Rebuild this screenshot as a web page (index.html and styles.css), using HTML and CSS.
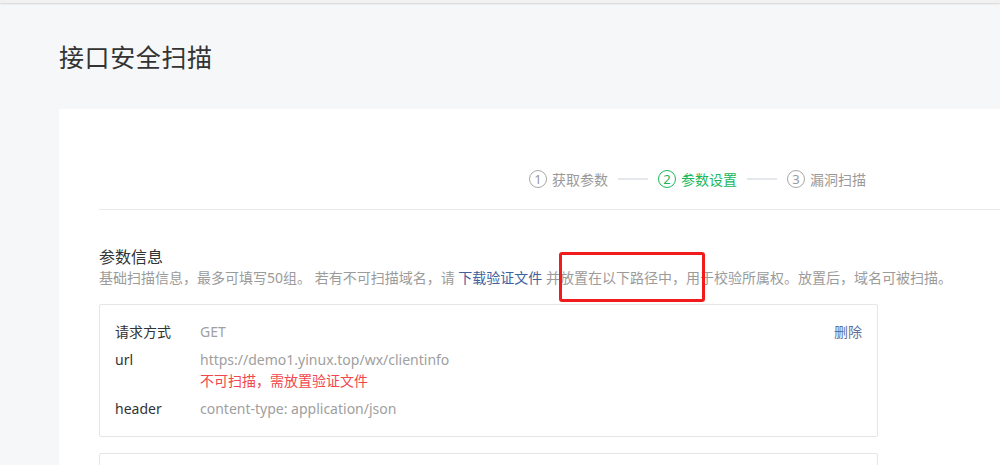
FILE: index.html
```html
<!DOCTYPE html>
<html lang="zh-CN">
<head>
<meta charset="utf-8">
<title>接口安全扫描</title>
<link rel="stylesheet" href="styles.css">
</head>
<body>
<div class="topbar"></div>
<main class="page">
  <h1 class="page-title">接口安全扫描</h1>
  <section class="card">
    <div class="steps">
      <div class="step">
        <span class="step-num">1</span><span class="step-text">获取参数</span>
      </div>
      <span class="step-line"></span>
      <div class="step active">
        <span class="step-num">2</span><span class="step-text">参数设置</span>
      </div>
      <span class="step-line"></span>
      <div class="step">
        <span class="step-num">3</span><span class="step-text">漏洞扫描</span>
      </div>
    </div>

    <div class="section">
      <h2 class="section-title">参数信息</h2>
      <p class="section-desc">基础扫描信息，最多可填写50组。 若有不可扫描域名，请 <a class="link" href="#">下载验证文件</a> 并放置在以下路径中，用于校验所属权。放置后，域名可被扫描。</p>

      <div class="param-box">
        <div class="param-rows">
          <div class="param-row">
            <span class="param-label">请求方式</span>
            <span class="param-value">GET</span>
          </div>
          <div class="param-row">
            <span class="param-label">url</span>
            <div class="param-value">
              <div>https://demo1.yinux.top/wx/clientinfo</div>
              <div class="param-error">不可扫描，需放置验证文件</div>
            </div>
          </div>
          <div class="param-row">
            <span class="param-label">header</span>
            <span class="param-value">content-type: application/json</span>
          </div>
        </div>
        <a class="param-delete" href="#">删除</a>
      </div>
      <div class="param-box next"></div>
    </div>
  </section>
</main>
<div class="annotation"></div>
</body>
</html>
```

FILE: styles.css
```css
* {
  box-sizing: border-box;
}

html, body {
  margin: 0;
  padding: 0;
}

body {
  background: #f6f7f9;
  font-family: "Noto Sans", "Noto Sans CJK SC", sans-serif;
  color: #333;
  width: 1000px;
  height: 465px;
  overflow: hidden;
  position: relative;
}

.topbar {
  height: 3px;
  background: #f1f1f1;
  box-shadow: 0 1px 2px rgba(0, 0, 0, 0.14);
  position: relative;
  z-index: 1;
}

.page {
  padding: 35px 0 0 59px;
  height: 462px;
  display: flex;
  flex-direction: column;
}

.page-title {
  margin: 0;
  font-family: "Noto Sans CJK SC", sans-serif;
  font-size: 25px;
  font-weight: 400;
  line-height: 36px;
  color: #333;
  letter-spacing: 0.6px;
}

.card {
  margin-top: 35px;
  background: #fff;
  flex: 1;
  min-height: 0;
  overflow: hidden;
  padding-left: 40px;
}

.steps {
  display: flex;
  align-items: center;
  height: 101px;
  padding: 58px 0 19px 430px;
  border-bottom: 1px solid #e8e9ec;
  font-family: "Noto Sans CJK SC", sans-serif;
}

.step {
  display: flex;
  align-items: center;
  color: #9a9a9a;
  font-size: 14px;
  line-height: 24px;
}

.step-num {
  width: 18px;
  height: 18px;
  border: 1px solid #a8a8a8;
  border-radius: 50%;
  font-family: "Noto Sans", sans-serif;
  font-size: 13px;
  line-height: 16px;
  text-align: center;
  margin-right: 5px;
}

.step.active {
  color: #18b85c;
}

.step.active .step-num {
  border-color: #18b85c;
}

.step-line {
  width: 30px;
  height: 2px;
  background: #e4e7eb;
  margin: 0 10px;
}

.section {
  padding-top: 35px;
  width: 779px;
}

.section-title {
  margin: 0;
  font-family: "Noto Sans CJK SC", sans-serif;
  font-size: 16px;
  font-weight: 400;
  line-height: 22px;
  color: #333;
}

.section-desc {
  margin: 1px 0 0;
  font-size: 14px;
  line-height: 20px;
  color: #9b9b9b;
  white-space: nowrap;
}

.link {
  color: #42609b;
  text-decoration: none;
}

.param-box {
  margin-top: 16px;
  border: 1px solid #e4e6ea;
  border-radius: 2px;
  display: flex;
  justify-content: space-between;
  align-items: flex-start;
  padding: 17px 15px 17px 15px;
}

.param-box.next {
  height: 40px;
}

.param-rows {
  display: flex;
  flex-direction: column;
  gap: 8px;
}

.param-row {
  display: flex;
  font-size: 14px;
  line-height: 20px;
}

.param-label {
  width: 85px;
  color: #333;
}

.param-value {
  color: #a0a0a0;
}

.param-error {
  color: #f2464d;
  margin-top: 1px;
}

.param-delete {
  font-size: 14px;
  line-height: 20px;
  color: #5c6f9e;
  text-decoration: none;
}

.annotation {
  position: absolute;
  left: 559px;
  top: 252px;
  width: 146px;
  height: 50px;
  border: 3px solid #f21b1b;
  border-radius: 3px;
}
```
